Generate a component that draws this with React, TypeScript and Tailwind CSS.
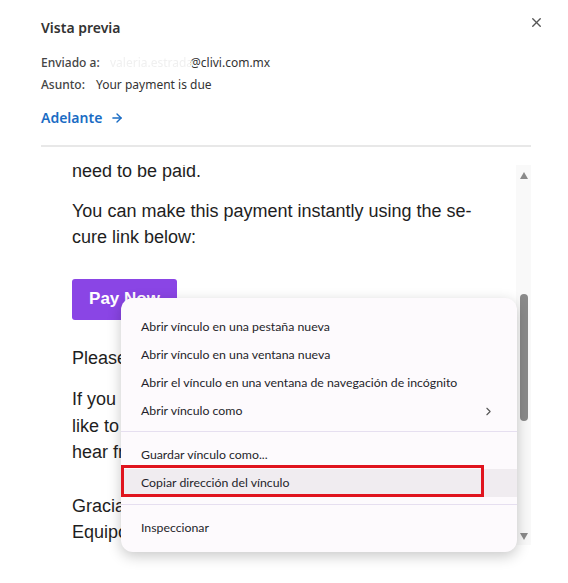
import React from 'react';
import { X, ArrowRight, ChevronRight } from 'lucide-react';

const menuItems = [
  'Abrir vínculo en una pestaña nueva',
  'Abrir vínculo en una ventana nueva',
  'Abrir el vínculo en una ventana de navegación de incógnito',
];

const MenuItem: React.FC<{ label: string; active?: boolean; chevron?: boolean }> = ({ label, active, chevron }) => (
  <div
    className={`h-[28px] flex items-center justify-between pl-[20px] pr-[22px] text-[12.3px] text-[#1f1f2b] ${
      active ? 'bg-[#f0ecf0]' : ''
    }`}
  >
    <span>{label}</span>
    {chevron && <ChevronRight size={13} strokeWidth={2} className="text-[#555]" />}
  </div>
);

const Separator = () => (
  <div className="pt-[7px] pb-[9px]">
    <div className="h-px bg-[#e6dff0]" />
  </div>
);

const ContextMenu = () => (
  <div className="absolute left-[121px] top-[298px] w-[396px] h-[254px] rounded-[12px] bg-[#fdfafd] shadow-[0_4px_14px_rgba(0,0,0,0.22)] pt-[15px] font-['Lato',sans-serif]">
    {menuItems.map((m) => (
      <MenuItem key={m} label={m} />
    ))}
    <MenuItem label="Abrir vínculo como" chevron />
    <div className="pt-[6px] pb-[9px]">
      <div className="h-px bg-[#e6dff0]" />
    </div>
    <MenuItem label="Guardar vínculo como..." />
    <div className="relative">
      <MenuItem label="Copiar dirección del vínculo" active />
      <div className="absolute left-0 top-[-4px] w-[363px] h-[32px] border-[3px] border-[#e0141e]" />
    </div>
    <Separator />
    <MenuItem label="Inspeccionar" />
  </div>
);

const Scrollbar = () => (
  <div className="w-[15px] h-full bg-[#f9f9f9] flex flex-col items-center">
    <div className="mt-[7px] w-0 h-0 border-l-[4.5px] border-r-[4.5px] border-b-[7px] border-l-transparent border-r-transparent border-b-[#8a8a8a]" />
    <div className="mt-[115px] w-[8px] h-[127px] rounded-full bg-[#8a8a8a]" />
    <div className="mt-[112px] w-0 h-0 border-l-[4.5px] border-r-[4.5px] border-t-[7px] border-l-transparent border-r-transparent border-t-[#8a8a8a]" />
  </div>
);

export default function App() {
  return (
    <div className="relative w-[568px] h-[583px] bg-white overflow-hidden font-['Noto_Sans',sans-serif]">
      <div className="pl-[41px] pr-[24px] pt-[16px] flex items-start justify-between">
        <h1 className="text-[14px] leading-[24px] font-semibold text-[#333]">Vista previa</h1>
        <X size={15} strokeWidth={2.2} className="text-[#555] mt-[-1px]" />
      </div>

      <div className="pl-[41px] mt-[12px] text-[12px] leading-[22px] text-[#333]">
        <div className="flex">
          <span className="text-[#444] font-medium w-[69px]">Enviado a:</span>
          <span className="text-[#f0f0f0] blur-[0.7px] w-[80px]">valeria.estrada</span>
          <span>@clivi.com.mx</span>
        </div>
        <div className="flex">
          <span className="text-[#444] font-medium w-[55px]">Asunto:</span>
          <span>Your payment is due</span>
        </div>
        <div className="mt-[11px] flex items-center gap-[8px] text-[#1a6cc4] text-[14px] font-semibold">
          <span>Adelante</span>
          <ArrowRight size={14} strokeWidth={2.4} />
        </div>
      </div>

      <div className="ml-[41px] w-[490px] h-[2px] bg-[#e8e8e8] mt-[16px]" />

      <div className="ml-[41px] w-[490px] mt-[18px] h-[380px] flex">
        <div className="flex-1 overflow-hidden">
          <div className="pl-[31px] mt-[-7px] font-['Liberation_Sans',Arial,sans-serif] text-[18px] leading-[26.5px] text-[#1e1e1e] whitespace-nowrap">
            <p>need to be paid.</p>
            <p className="mt-[13px]">
              You can make this payment instantly using the se-
              <br />
              cure link below:
            </p>
            <div className="mt-[28px] w-[105px] h-[41px] rounded-[3px] bg-[#8a45e5] flex items-center justify-center text-white font-bold text-[17px]">
              Pay Now
            </div>
            <p className="mt-[25px]">Please complete your payment at your convenience.</p>
            <p className="mt-[15px]">
              If you have any questions or
              <br />
              like to talk to our team, we would love to
              <br />
              hear from you.
            </p>
            <p className="mt-[27px]">
              Gracias,
              <br />
              Equipo Clivi
            </p>
          </div>
        </div>
        <Scrollbar />
      </div>

      <ContextMenu />
    </div>
  );
}
